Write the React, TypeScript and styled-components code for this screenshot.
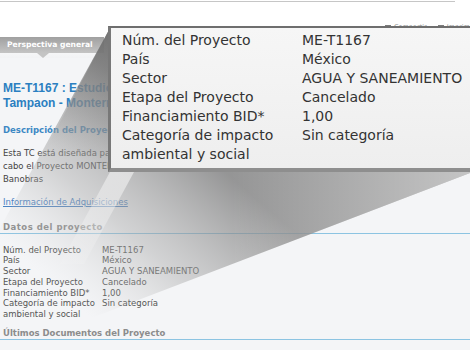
import { Fragment } from "react";
import styled, { createGlobalStyle } from "styled-components";

const GlobalStyle = createGlobalStyle`
  html, body {
    margin: 0;
    padding: 0;
  }
  body {
    background: #f4f5f7;
    font-family: "DejaVu Sans", Verdana, sans-serif;
    overflow: hidden;
  }
`;

const Page = styled.div`
  position: relative;
  width: 470px;
  height: 350px;
  overflow: hidden;
`;

const Header = styled.div`
  background: #fff;
  height: 37px;
  padding-top: 1px;
  box-sizing: border-box;
`;

const TopRule = styled.div`
  width: 455px;
  height: 1px;
  background: #c6c6c6;
`;

const Tools = styled.div`
  display: flex;
  gap: 11px;
  margin-top: 21px;
  padding-left: 385px;
  font-size: 6.5px;
  line-height: 9px;
  color: #8a8a8a;
  white-space: nowrap;
  overflow: hidden;
`;

const ToolItem = styled.span`
  display: flex;
  align-items: center;
  gap: 3px;
  &::before {
    content: "";
    width: 6px;
    height: 6px;
    background: #7c7c7c;
  }
`;

const TabBar = styled.div`
  height: 21px;
  background: linear-gradient(#ffffff, #f2f3f5);
`;

const Tab = styled.div`
  position: relative;
  width: 104px;
  height: 16px;
  padding-left: 7px;
  box-sizing: border-box;
  background: linear-gradient(#a0a0a0, #c4c4c4);
  color: #fff;
  font-weight: bold;
  font-size: 7.6px;
  line-height: 16px;
  white-space: nowrap;
  &::after {
    content: "";
    position: absolute;
    left: 37px;
    top: 100%;
    border-left: 6px solid transparent;
    border-right: 6px solid transparent;
    border-top: 5px solid #c4c4c4;
  }
`;

const Content = styled.div`
  padding: 0 3px;
`;

const Title = styled.h1`
  margin: 23px 0 0;
  font: 700 12px/15px "Liberation Sans", Arial, sans-serif;
  color: #2b7fc1;
  white-space: nowrap;
`;

const SectionTitle = styled.h2`
  margin: 13px 0 0;
  font-size: 8.5px;
  line-height: 13px;
  font-weight: bold;
  color: #3c88c4;
  white-space: nowrap;
`;

const Paragraph = styled.p`
  margin: 10px 0 0;
  font-size: 8.5px;
  line-height: 13px;
  color: #444;
  white-space: nowrap;
`;

const Link = styled.a`
  display: block;
  margin-top: 10px;
  font-size: 8.5px;
  line-height: 13px;
  color: #4a82c2;
  text-decoration: underline;
`;

const GrayHeading = styled.h3<{ $gap: number; $spacing: number }>`
  margin: ${(p) => p.$gap}px -3px 0;
  padding-left: 3px;
  font-size: 8.5px;
  line-height: 11px;
  font-weight: bold;
  color: #8c8c8c;
  letter-spacing: ${(p) => p.$spacing}px;
  border-bottom: 1px solid #8cc4e2;
`;

const DataGrid = styled.div`
  display: grid;
  grid-template-columns: 99px auto;
  margin-top: 11px;
  font-size: 8.5px;
  line-height: 10.8px;
  color: #555;
`;

const Cone = styled.svg`
  position: absolute;
  left: 0;
  top: 0;
  z-index: 1;
  pointer-events: none;
`;

const Loupe = styled.div`
  position: absolute;
  left: 108px;
  top: 26px;
  z-index: 2;
  width: 400px;
  height: 146px;
  box-sizing: border-box;
  padding: 2.5px 0 0 11px;
  border-top: 2px solid #6e6e6e;
  border-left: 3px solid #787878;
  border-bottom: 4px solid #8e8e8e;
  background: linear-gradient(#f6f6f6, #eeeeee);
  display: grid;
  grid-template-columns: 180px auto;
  align-content: start;
  font-size: 14px;
  line-height: 19px;
  color: #333;
`;

const Label = styled.span`
  white-space: pre-line;
`;

const rows: [string, string][] = [
  ["Núm. del Proyecto", "ME-T1167"],
  ["País", "México"],
  ["Sector", "AGUA Y SANEAMIENTO"],
  ["Etapa del Proyecto", "Cancelado"],
  ["Financiamiento BID*", "1,00"],
  ["Categoría de impacto\nambiental y social", "Sin categoría"],
];

function Rows() {
  return (
    <>
      {rows.map(([label, value]) => (
        <Fragment key={label}>
          <Label>{label}</Label>
          <span>{value}</span>
        </Fragment>
      ))}
    </>
  );
}

export default function App() {
  return (
    <Page>
      <GlobalStyle />
      <Header>
        <TopRule />
        <Tools>
          <ToolItem>Compartir</ToolItem>
          <ToolItem>Imprimir</ToolItem>
        </Tools>
      </Header>
      <TabBar>
        <Tab>Perspectiva general</Tab>
      </TabBar>
      <Content>
        <Title>
          ME-T1167 : Estudios de Factibilidad del Acueducto El
          <br />
          Tampaon - Monterrey
        </Title>
        <SectionTitle>Descripción del Proyecto</SectionTitle>
        <Paragraph>
          Esta TC está diseñada para apoyar la preparación de estudios para llevar a
          <br />
          cabo el Proyecto MONTERREY VI, en coordinación con la CONAGUA y
          <br />
          Banobras
        </Paragraph>
        <Link>Información de Adquisiciones</Link>
        <GrayHeading $gap={12.5} $spacing={0.5}>
          Datos del proyecto
        </GrayHeading>
        <DataGrid>
          <Rows />
        </DataGrid>
        <GrayHeading $gap={7.5} $spacing={0}>
          Últimos Documentos del Proyecto
        </GrayHeading>
      </Content>

      <Cone width="470" height="350" viewBox="0 0 470 350">
        <defs>
          <linearGradient id="shade" gradientUnits="userSpaceOnUse" x1="200" y1="150" x2="70" y2="300">
            <stop offset="0" stopColor="#7a7a7a" stopOpacity="0.78" />
            <stop offset="0.55" stopColor="#a8a8a8" stopOpacity="0.45" />
            <stop offset="1" stopColor="#d0d0d0" stopOpacity="0" />
          </linearGradient>
          <linearGradient id="fadeRight" gradientUnits="userSpaceOnUse" x1="230" y1="0" x2="470" y2="0">
            <stop offset="0" stopColor="#ffffff" stopOpacity="0" />
            <stop offset="1" stopColor="#ffffff" stopOpacity="0.45" />
          </linearGradient>
          <linearGradient id="band" gradientUnits="userSpaceOnUse" x1="110" y1="170" x2="50" y2="270">
            <stop offset="0" stopColor="#ffffff" stopOpacity="0.5" />
            <stop offset="1" stopColor="#ffffff" stopOpacity="0" />
          </linearGradient>
          <linearGradient id="wedge" gradientUnits="userSpaceOnUse" x1="110" y1="28" x2="60" y2="150">
            <stop offset="0" stopColor="#666666" stopOpacity="0.8" />
            <stop offset="1" stopColor="#9a9a9a" stopOpacity="0" />
          </linearGradient>
        </defs>
        <polygon points="110,28 470,28 470,173 235,263 60,330 0,340 0,228" fill="url(#shade)" />
        <polygon points="230,28 470,28 470,173 235,263" fill="url(#fadeRight)" />
        <polygon points="110,172 134,172 84,264 60,264" fill="url(#band)" />
        <polygon points="110,28 110,172 40,160" fill="url(#wedge)" />
      </Cone>

      <Loupe>
        <Rows />
      </Loupe>
    </Page>
  );
}
